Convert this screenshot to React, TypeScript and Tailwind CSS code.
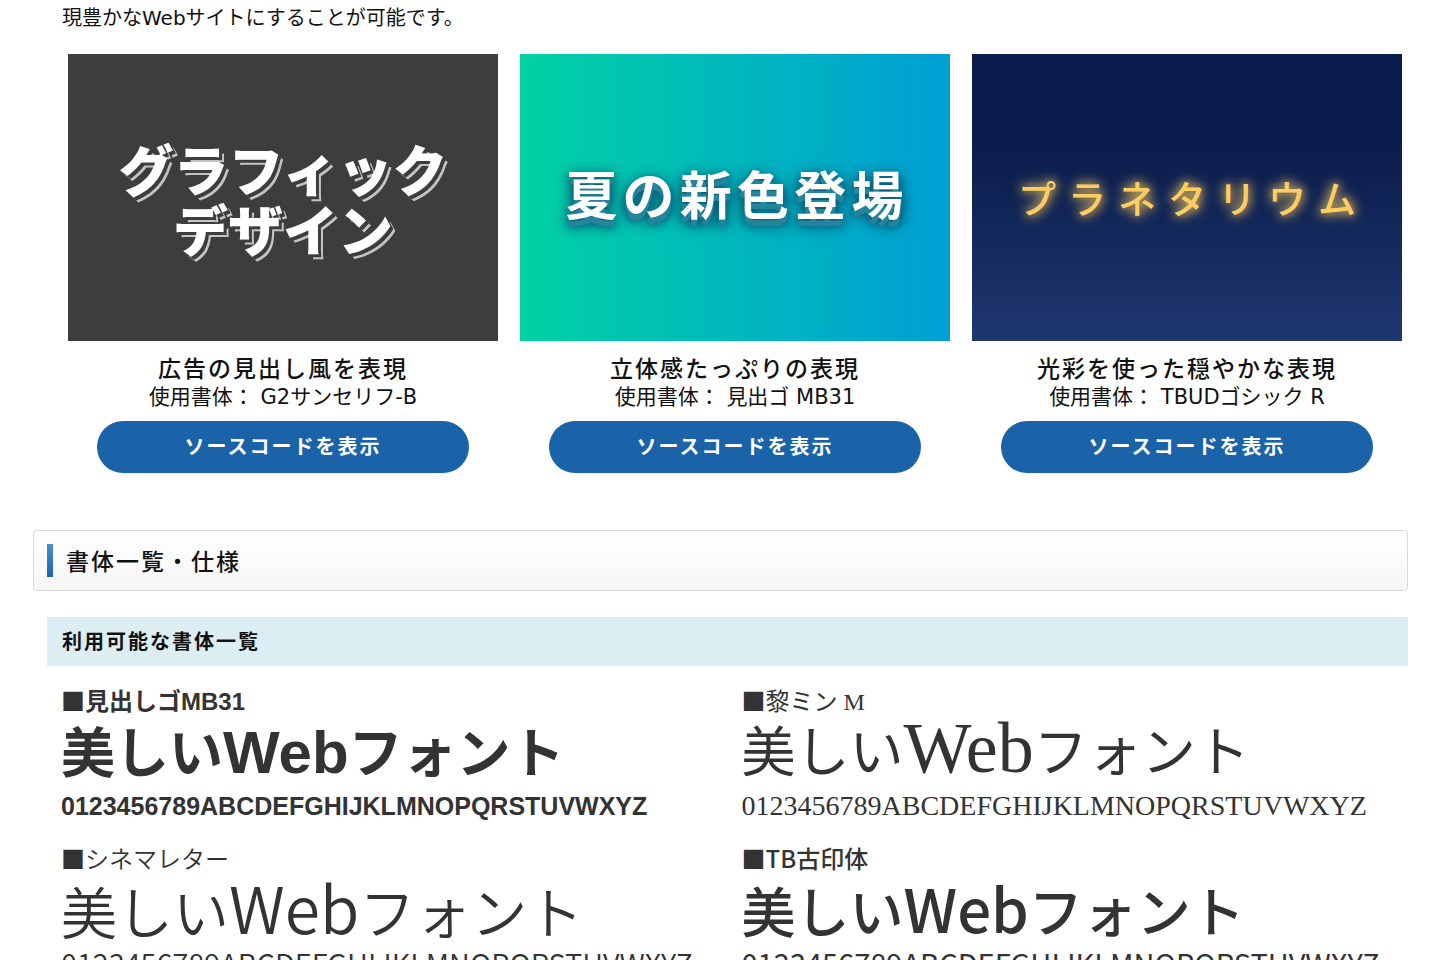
import { clsx } from 'clsx';

interface Sample {
  lines: string[];
  textClass: string;
  artClass: string;
  title: string;
  font: string;
}

interface Typeface {
  name: string;
  fontClass: string;
  kanaClass: string;
  latinClass: string;
  alphabetClass: string;
}

const ALPHABET = '0123456789ABCDEFGHIJKLMNOPQRSTUVWXYZ';

const samples: Sample[] = [
  {
    lines: ['グラフィック', 'デザイン'],
    artClass: 'bg-[#3d3d3d]',
    textClass:
      'text-[55px] leading-[60px] font-black text-white [text-shadow:2px_2px_0_#3d3d3d,3px_3px_0_#3d3d3d,5px_5px_0_#c4c4c4]',
    title: '広告の見出し風を表現',
    font: 'G2サンセリフ-B',
  },
  {
    lines: ['夏の新色登場'],
    artClass: 'bg-linear-to-r from-[#00d2a3] via-[#00b8bd] to-[#009fd4] pb-2',
    textClass:
      'pl-1 text-[52px] leading-[60px] font-bold tracking-widest text-white [text-shadow:0_7px_0_#23849b,0_5px_8px_#0b5b78,0_5px_12px_#0b5b78,0_5px_18px_#0b5b78]',
    title: '立体感たっぷりの表現',
    font: '見出ゴ MB31',
  },
  {
    lines: ['プラネタリウム'],
    artClass: 'bg-linear-to-b from-[#0a1c4b] from-30% to-[#1e3870]',
    textClass:
      'pl-3 text-[38px] leading-[60px] font-medium tracking-[12px] text-[#fccd62] [text-shadow:0_0_8px_#b89a5a,0_0_12px_#b89a5a,0_0_16px_#a08a58]',
    title: '光彩を使った穏やかな表現',
    font: 'TBUDゴシック R',
  },
];

const typefaces: Typeface[] = [
  {
    name: '見出しゴMB31',
    fontClass: "font-['Liberation_Sans','Noto_Sans_CJK_JP',sans-serif] font-bold",
    kanaClass: 'text-[54px]',
    latinClass: 'text-[60px]',
    alphabetClass: 'text-[25px]',
  },
  {
    name: '黎ミン M',
    fontClass: "font-['Liberation_Serif','Noto_Sans_CJK_JP',serif] font-normal",
    kanaClass: 'text-[54px]',
    latinClass: 'text-[72px]',
    alphabetClass: 'text-[28px]',
  },
  {
    name: 'シネマレター',
    fontClass: "font-['Noto_Sans_CJK_JP',sans-serif] font-[350]",
    kanaClass: 'text-[56px]',
    latinClass: 'text-[64px]',
    alphabetClass: 'text-[29px]',
  },
  {
    name: 'TB古印体',
    fontClass: "font-['Noto_Sans_CJK_JP',sans-serif] font-medium",
    kanaClass: 'text-[54px]',
    latinClass: 'text-[60px]',
    alphabetClass: 'text-[29px] font-normal',
  },
];

function SampleCard({ sample }: { sample: Sample }) {
  return (
    <article className="flex flex-col items-center text-center">
      <div
        className={clsx(
          "mb-[14px] flex aspect-[3/2] w-full flex-col items-center justify-center font-['Noto_Sans_CJK_JP',sans-serif] whitespace-nowrap",
          sample.artClass
        )}
      >
        {sample.lines.map((line) => (
          <span key={line} className={sample.textClass}>
            {line}
          </span>
        ))}
      </div>
      <h3 className="text-[23px] leading-7 font-medium tracking-[2px]">{sample.title}</h3>
      <p className="text-[21px] leading-7">使用書体： {sample.font}</p>
      <button
        type="button"
        className="mt-[10px] w-[372px] max-w-full rounded-full bg-[#1a63a8] py-3 text-[20px] leading-7 font-bold tracking-[2px] text-white"
      >
        ソースコードを表示
      </button>
    </article>
  );
}

function TypefaceSample({ face }: { face: Typeface }) {
  return (
    <li className={clsx('leading-[52px] whitespace-nowrap text-[#333]', face.fontClass)}>
      <h4 className="text-[24px]">
        <span className="font-['Noto_Sans_CJK_JP',sans-serif]">■</span>
        {face.name}
      </h4>
      <p className={clsx('h-[52px]', face.kanaClass)}>
        美しい<span className={clsx('leading-0', face.latinClass)}>Web</span>フォント
      </p>
      <p className={face.alphabetClass}>{ALPHABET}</p>
    </li>
  );
}

export default function App() {
  return (
    <main className="h-screen overflow-hidden bg-white pr-8 pl-[33px] font-['DejaVu_Sans','Noto_Sans_CJK_JP',sans-serif] text-[#111]">
      <section className="pr-[6px] pl-[35px]">
        <p className="-ml-[6px] pt-1 pb-[22px] text-[20px] leading-7">
          現豊かなWebサイトにすることが可能です。
        </p>
        <div className="grid grid-cols-3 gap-[22px]">
          {samples.map((sample) => (
            <SampleCard key={sample.title} sample={sample} />
          ))}
        </div>
      </section>

      <section className="mt-[57px]">
        <div className="flex items-end gap-[13px] rounded border border-[#d9d9d9] bg-linear-to-b from-white to-[#f6f6f6] px-[13px] py-[13px]">
          <span className="h-[33px] w-[6px] bg-linear-to-b from-[#4c8fce] to-[#1a63b3]" />
          <h2 className="text-[23px] leading-[29px] font-medium tracking-[2px]">書体一覧・仕様</h2>
        </div>

        <h3 className="mt-[26px] ml-[14px] bg-[#dcedf4] px-[15px] pt-[11px] pb-[10px] text-[20px] leading-7 font-bold tracking-[2px]">
          利用可能な書体一覧
        </h3>

        <ul className="mt-2 ml-7 grid grid-cols-2 gap-x-[14px]">
          {typefaces.map((face) => (
            <TypefaceSample key={face.name} face={face} />
          ))}
        </ul>
      </section>
    </main>
  );
}
